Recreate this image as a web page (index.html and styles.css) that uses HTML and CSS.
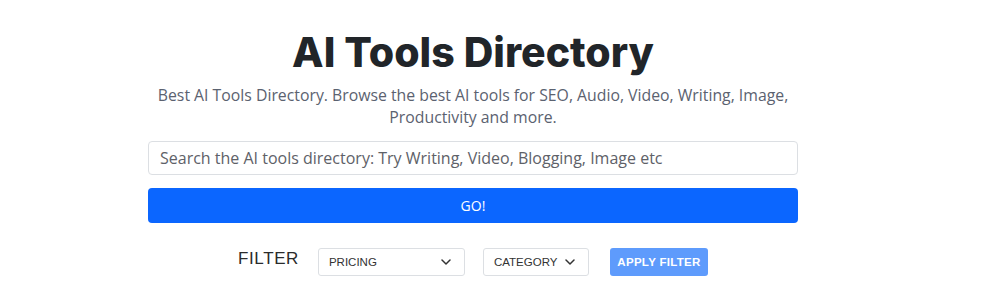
FILE: index.html
```html
<!DOCTYPE html>
<html lang="en">
<head>
<meta charset="utf-8">
<title>AI Tools Directory</title>
<link rel="stylesheet" href="styles.css">
</head>
<body>
<main class="directory">
  <h1 class="title">AI Tools Directory</h1>
  <p class="subtitle">Best AI Tools Directory. Browse the best AI tools for SEO, Audio, Video, Writing, Image, Productivity and more.</p>
  <form class="search">
    <input class="search-input" type="text" placeholder="Search the AI tools directory: Try Writing, Video, Blogging, Image etc">
    <button class="go-btn" type="button">GO!</button>
  </form>
  <div class="filter-row">
    <span class="filter-label">FILTER</span>
    <div class="select select-pricing">
      <span>PRICING</span>
      <svg class="chev" width="10" height="6" viewBox="0 0 10 6"><path d="M1 1l4 4 4-4" fill="none" stroke="#333" stroke-width="1.5" stroke-linecap="round" stroke-linejoin="round"/></svg>
    </div>
    <div class="select select-category">
      <span>CATEGORY</span>
      <svg class="chev" width="10" height="6" viewBox="0 0 10 6"><path d="M1 1l4 4 4-4" fill="none" stroke="#333" stroke-width="1.5" stroke-linecap="round" stroke-linejoin="round"/></svg>
    </div>
    <button class="apply-btn" type="button">APPLY FILTER</button>
  </div>
</main>
</body>
</html>
```
FILE: styles.css
```css
* { box-sizing: border-box; }
html, body { margin: 0; padding: 0; background: #fff; }
body { font-family: "Open Sans", "Liberation Sans", sans-serif; color: #212529; }

.directory {
  width: 650px;
  margin-left: 148px;
  padding-top: 24px;
  display: flex;
  flex-direction: column;
  align-items: center;
}

.title {
  margin: 0;
  font-family: Inter, "Liberation Sans", sans-serif;
  font-weight: 800;
  font-size: 41px;
  line-height: 56px;
  color: #212529;
  letter-spacing: 0;
}

.subtitle {
  margin: 4px 0 0;
  text-align: center;
  font-size: 15.8px;
  line-height: 22px;
  color: #5b6270;
  width: 650px;
}

.search {
  width: 100%;
  margin-top: 13px;
  display: flex;
  flex-direction: column;
  gap: 13px;
}

.search-input {
  width: 100%;
  height: 34px;
  border: 1px solid #dcdfe3;
  border-radius: 4px;
  padding: 0 11px;
  font-family: "Open Sans", "Liberation Sans", sans-serif;
  font-size: 16px;
  color: #555;
  outline: none;
}
.search-input::placeholder { color: #5e6168; }

.go-btn {
  width: 100%;
  height: 35px;
  border: 0;
  border-radius: 4px;
  background: #0b66ff;
  color: #fff;
  font-family: "Open Sans", "Liberation Sans", sans-serif;
  font-size: 14px;
}

.filter-row {
  margin-top: 25px;
  display: flex;
  align-items: center;
}

.filter-label {
  font-family: "Liberation Sans", sans-serif;
  font-size: 17px;
  color: #2b2b2b;
  letter-spacing: 0.6px;
  margin-right: 19px;
  margin-top: -6px;
}

.select {
  height: 28px;
  border: 1px solid #dcdfe3;
  border-radius: 3px;
  display: flex;
  align-items: center;
  justify-content: space-between;
  padding: 0 13px 0 10px;
  font-family: "Liberation Sans", sans-serif;
  font-size: 11.5px;
  color: #333;
  letter-spacing: 0;
}
.select-pricing { width: 147px; margin-right: 18px; }
.select-category { width: 106px; margin-right: 21px; }

.apply-btn {
  height: 28px;
  width: 98px;
  border: 0;
  border-radius: 3px;
  background: #5e9bfc;
  color: #fff;
  font-family: "Liberation Sans", sans-serif;
  font-weight: bold;
  font-size: 11.5px;
  letter-spacing: 0.3px;
  padding: 0;
}
```
